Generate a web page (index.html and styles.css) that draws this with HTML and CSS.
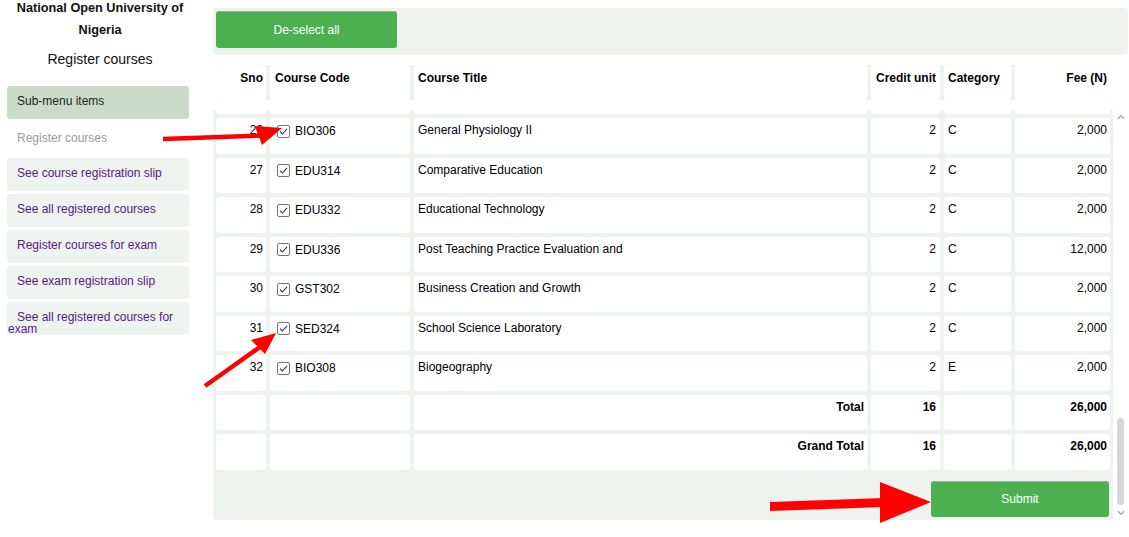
FILE: index.html
```html
<!DOCTYPE html>
<html lang="en">
<head>
<meta charset="utf-8">
<title>Register courses</title>
<link rel="stylesheet" href="styles.css">
</head>
<body>
<div class="page">
  <aside class="sidebar">
    <h1 class="uni">National Open University of Nigeria</h1>
    <h2 class="title">Register courses</h2>
    <nav class="menu">
      <div class="menu-head">Sub-menu items</div>
      <div class="menu-current">Register courses</div>
      <a class="menu-item" href="#">See course registration slip</a>
      <a class="menu-item" href="#">See all registered courses</a>
      <a class="menu-item" href="#">Register courses for exam</a>
      <a class="menu-item" href="#">See exam registration slip</a>
      <a class="menu-item" href="#">See all registered courses for exam</a>
    </nav>
  </aside>

  <main class="panel">
    <div class="toolbar"><button class="btn deselect">De-select all</button></div>

    <div class="thead">
      <div class="grid hrow">
        <div class="hcell r sno">Sno</div>
        <div class="hcell code-h">Course Code</div>
        <div class="hcell">Course Title</div>
        <div class="hcell r">Credit unit</div>
        <div class="hcell">Category</div>
        <div class="hcell r fee">Fee (N)</div>
      </div>
    </div>

    <div class="scroller">
      <div class="scroll-content">
        <div class="grid row stub">
          <div class="cell"></div><div class="cell"></div><div class="cell"></div><div class="cell"></div><div class="cell"></div><div class="cell"></div>
        </div>

        <div class="grid row">
          <div class="cell r sno">26</div>
          <div class="cell code"><span class="cb-wrap"><svg class="cb" viewBox="0 0 13 13"><rect x="0.5" y="0.5" width="12" height="12" rx="1.5"/><path d="M3 6.6 L5.4 9 L10 3.8"/></svg>BIO306</span></div>
          <div class="cell">General Physiology II</div>
          <div class="cell r">2</div>
          <div class="cell">C</div>
          <div class="cell r fee">2,000</div>
        </div>
        <div class="grid row">
          <div class="cell r sno">27</div>
          <div class="cell code"><span class="cb-wrap"><svg class="cb" viewBox="0 0 13 13"><rect x="0.5" y="0.5" width="12" height="12" rx="1.5"/><path d="M3 6.6 L5.4 9 L10 3.8"/></svg>EDU314</span></div>
          <div class="cell">Comparative Education</div>
          <div class="cell r">2</div>
          <div class="cell">C</div>
          <div class="cell r fee">2,000</div>
        </div>
        <div class="grid row">
          <div class="cell r sno">28</div>
          <div class="cell code"><span class="cb-wrap"><svg class="cb" viewBox="0 0 13 13"><rect x="0.5" y="0.5" width="12" height="12" rx="1.5"/><path d="M3 6.6 L5.4 9 L10 3.8"/></svg>EDU332</span></div>
          <div class="cell">Educational Technology</div>
          <div class="cell r">2</div>
          <div class="cell">C</div>
          <div class="cell r fee">2,000</div>
        </div>
        <div class="grid row">
          <div class="cell r sno">29</div>
          <div class="cell code"><span class="cb-wrap"><svg class="cb" viewBox="0 0 13 13"><rect x="0.5" y="0.5" width="12" height="12" rx="1.5"/><path d="M3 6.6 L5.4 9 L10 3.8"/></svg>EDU336</span></div>
          <div class="cell">Post Teaching Practice Evaluation and</div>
          <div class="cell r">2</div>
          <div class="cell">C</div>
          <div class="cell r fee">12,000</div>
        </div>
        <div class="grid row">
          <div class="cell r sno">30</div>
          <div class="cell code"><span class="cb-wrap"><svg class="cb" viewBox="0 0 13 13"><rect x="0.5" y="0.5" width="12" height="12" rx="1.5"/><path d="M3 6.6 L5.4 9 L10 3.8"/></svg>GST302</span></div>
          <div class="cell">Business Creation and Growth</div>
          <div class="cell r">2</div>
          <div class="cell">C</div>
          <div class="cell r fee">2,000</div>
        </div>
        <div class="grid row">
          <div class="cell r sno">31</div>
          <div class="cell code"><span class="cb-wrap"><svg class="cb" viewBox="0 0 13 13"><rect x="0.5" y="0.5" width="12" height="12" rx="1.5"/><path d="M3 6.6 L5.4 9 L10 3.8"/></svg>SED324</span></div>
          <div class="cell">School Science Laboratory</div>
          <div class="cell r">2</div>
          <div class="cell">C</div>
          <div class="cell r fee">2,000</div>
        </div>
        <div class="grid row">
          <div class="cell r sno">32</div>
          <div class="cell code"><span class="cb-wrap"><svg class="cb" viewBox="0 0 13 13"><rect x="0.5" y="0.5" width="12" height="12" rx="1.5"/><path d="M3 6.6 L5.4 9 L10 3.8"/></svg>BIO308</span></div>
          <div class="cell">Biogeography</div>
          <div class="cell r">2</div>
          <div class="cell">E</div>
          <div class="cell r fee">2,000</div>
        </div>
        <div class="grid row total">
          <div class="cell"></div>
          <div class="cell"></div>
          <div class="cell r tot-label">Total</div>
          <div class="cell r">16</div>
          <div class="cell"></div>
          <div class="cell r fee">26,000</div>
        </div>
        <div class="grid row total">
          <div class="cell"></div>
          <div class="cell"></div>
          <div class="cell r tot-label">Grand Total</div>
          <div class="cell r">16</div>
          <div class="cell"></div>
          <div class="cell r fee">26,000</div>
        </div>

        <div class="submit-bar"><button class="btn submit">Submit</button></div>
      </div>

      <div class="scrollbar">
        <svg class="sb-arrow" viewBox="0 0 8 5"><path d="M1 4.2 L4 1.2 L7 4.2"/></svg>
        <div class="sb-track"><div class="sb-thumb"></div></div>
        <svg class="sb-arrow" viewBox="0 0 8 5"><path d="M1 0.8 L4 3.8 L7 0.8"/></svg>
      </div>
    </div>
  </main>
</div>

<svg class="annotations" width="1129" height="537" viewBox="0 0 1129 537">
  <line x1="163" y1="139" x2="262" y2="135.5" stroke="#ff0000" stroke-width="4.5"/>
  <polygon points="255,126 282,128 262,145" fill="#ff0000"/>
  <line x1="205" y1="386" x2="260" y2="347" stroke="#ff0000" stroke-width="4.5"/>
  <polygon points="251,340 276,333 265,354" fill="#ff0000"/>
  <polygon points="770,502 884,498 884,507 770,511" fill="#ff0000"/>
  <polygon points="880,482 931,502 880,523" fill="#ff0000"/>
</svg>
</body>
</html>
```

FILE: styles.css
```css
body {
  margin: 0;
  font-family: "Liberation Sans", Arial, sans-serif;
  font-size: 12px;
  color: #000;
  background: #fff;
}

.page {
  display: flex;
  align-items: flex-start;
}

/* Sidebar */
.sidebar {
  width: 200px;
  flex: none;
  margin-right: 13px;
}

.uni {
  margin: -3px 0 0;
  padding: 0 10px;
  font-size: 12.7px;
  font-weight: bold;
  line-height: 22px;
  text-align: center;
  color: #111;
}

.title {
  margin: 9px 0 0;
  font-size: 14px;
  font-weight: normal;
  line-height: 18px;
  text-align: center;
  color: #111;
}

.menu {
  margin: 18px 11px 0 7px;
  display: flex;
  flex-direction: column;
  gap: 3px;
}

.menu-head,
.menu-current,
.menu-item {
  box-sizing: border-box;
  min-height: 33px;
  line-height: 12px;
  border-radius: 3px;
}

.menu-head {
  background: #cbdccb;
  padding: 9px 10px 0;
  color: #222;
}

.menu-current {
  padding: 10px 10px 0;
  color: #9a9a9a;
}

.menu-item {
  display: block;
  background: #eef3ef;
  padding: 9px 1px 0;
  text-indent: 9px;
  color: #551a8b;
  text-decoration: none;
}

/* Main panel */
.panel {
  flex: 1;
  min-width: 0;
  margin: 8px 1px 0 0;
}

.toolbar {
  background: #eef3ef;
  border-radius: 4px;
  padding: 3px 3px 7px;
}

.btn {
  background: #4caf50;
  color: #fff;
  border: none;
  border-radius: 3px;
  box-shadow: inset 0 1px 0 #9fb39f;
  font-family: "Liberation Sans", Arial, sans-serif;
  font-size: 12px;
  padding: 0;
  cursor: pointer;
}

.deselect {
  display: block;
  width: 181px;
  height: 37px;
}

.thead {
  background: #fff;
  padding: 10px 0 10px 3px;
}

.grid {
  display: grid;
  grid-template-columns: 50px 140px 453px 69px 67px 95px;
  column-gap: 4px;
}

.hrow {
  width: 894px;
  background: #eef3ef;
}

.hcell {
  background: #fff;
  height: 35px;
  box-sizing: border-box;
  padding: 6px 4px 0;
  line-height: 14px;
  font-weight: bold;
  border-radius: 3px;
  white-space: nowrap;
}

.r {
  text-align: right;
}

.sno {
  padding-right: 3px;
}

.fee {
  padding-right: 3px;
}

.code-h {
  padding-left: 5px;
}

/* Scroll area */
.scroller {
  display: flex;
  height: 410px;
}

.scroll-content {
  flex: 1;
  min-width: 0;
  background: #eef3ef;
  padding: 0 3px;
  display: flex;
  flex-direction: column;
  gap: 4px;
  overflow: hidden;
  border-radius: 0 0 0 4px;
}

.cell {
  background: #fff;
  height: 35.5px;
  box-sizing: border-box;
  padding: 5px 4px 0;
  line-height: 14px;
  border-radius: 3px;
  white-space: nowrap;
  overflow: hidden;
}

.stub .cell {
  height: 4px;
  padding: 0;
  border-radius: 0 0 3px 3px;
}

.cell.sno {
  padding-right: 3px;
}

.cell.fee {
  padding-right: 3px;
}

.cell.code {
  padding: 6px 4px 0 7px;
}

.cb-wrap {
  display: flex;
  align-items: center;
  height: 14px;
}

.cb {
  width: 13px;
  height: 13px;
  flex: none;
  margin-right: 5px;
}

.cb rect {
  fill: #fff;
  stroke: #767676;
  stroke-width: 1;
}

.cb path {
  fill: none;
  stroke: #3b3050;
  stroke-width: 1.1;
}

.total .cell {
  font-weight: bold;
}

.cell.tot-label {
  padding-right: 3px;
}

.submit-bar {
  margin-top: 7.5px;
  padding: 0 1px 3px 0;
  display: flex;
  justify-content: flex-end;
}

.submit {
  width: 178px;
  height: 36px;
}

/* Scrollbar */
.scrollbar {
  width: 15px;
  flex: none;
  background: #fff;
  box-sizing: border-box;
  padding: 4px 0;
  display: flex;
  flex-direction: column;
  align-items: center;
}

.sb-arrow {
  width: 8px;
  height: 6px;
  flex: none;
  margin-left: 1px;
}

.sb-arrow path {
  fill: none;
  stroke: #a8a8a8;
  stroke-width: 1.4;
}

.sb-track {
  flex: 1;
  display: flex;
  flex-direction: column;
  justify-content: flex-end;
  padding-bottom: 5px;
}

.sb-thumb {
  width: 7px;
  height: 87px;
  background: #d4d8dd;
  border-radius: 4px;
}

/* Annotation overlay */
.annotations {
  position: absolute;
  top: 0;
  left: 0;
  pointer-events: none;
}
```
